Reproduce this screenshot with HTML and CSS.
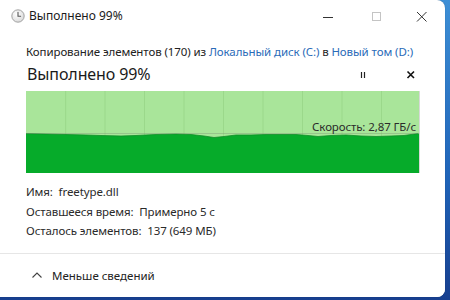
FILE: index.html
```html
<!DOCTYPE html>
<html lang="ru">
<head>
<meta charset="utf-8">
<link rel="stylesheet" href="styles.css">
</head>
<body>
<div class="window">
  <div class="titlebar">
    <svg class="clock" width="14" height="14" viewBox="0 0 14 14">
      <defs>
        <radialGradient id="cg" cx="40%" cy="35%" r="70%">
          <stop offset="0" stop-color="#ffffff"/>
          <stop offset="1" stop-color="#d8d8d8"/>
        </radialGradient>
      </defs>
      <circle cx="7" cy="7" r="6.2" fill="url(#cg)" stroke="#9a9a9a" stroke-width="0.9"/>
      <path d="M7 3.2 V7.3 H9.6" fill="none" stroke="#555" stroke-width="1.1" stroke-linecap="round"/>
    </svg>
    <span class="title">Выполнено 99%</span>
    <div class="winbtns">
      <svg class="wb" width="46" height="30" viewBox="0 0 46 30"><path d="M18 16.5 H28" stroke="#333" stroke-width="1"/></svg>
      <svg class="wb" width="46" height="30" viewBox="0 0 46 30"><rect x="19.5" y="11.5" width="8" height="8" fill="none" stroke="#c4c4c4" stroke-width="1"/></svg>
      <svg class="wb" width="46" height="30" viewBox="0 0 46 30"><path d="M18 11 L27.5 20.5 M27.5 11 L18 20.5" stroke="#333" stroke-width="1"/></svg>
    </div>
  </div>
  <div class="content">
    <div class="copyline">Копирование элементов (170) из <span class="link">Локальный диск (C:)</span> в <span class="link">Новый том (D:)</span></div>
    <div class="headrow">
      <span class="big">Выполнено 99%</span>
      <div class="ctrls">
        <svg width="10" height="10" viewBox="0 0 10 10"><path d="M3.5 2 V8 M6.5 2 V8" stroke="#222" stroke-width="1.2"/></svg>
        <svg width="10" height="10" viewBox="0 0 10 10"><path d="M1.5 1.5 L8 8 M8 1.5 L1.5 8" stroke="#111" stroke-width="1.6"/></svg>
      </div>
    </div>
    <div class="graph">
      <svg width="393" height="82" viewBox="0 0 393 82">
        <rect x="0" y="0" width="393" height="82" fill="#a9e59a"/>
        <g stroke="#9bd88b" stroke-width="1">
          <path d="M39.7 0 V82 M79 0 V82 M118.5 0 V82 M158 0 V82 M197.5 0 V82 M237 0 V82 M276.5 0 V82 M316 0 V82 M355.5 0 V82"/>
        </g>
        <path d="M0 42.5 L20 43 L40 43.5 L60 44 L75 44.5 L95 45 L110 44.5 L130 43.5 L150 43 L165 43.5 L178 45 L188 46.5 L198 45.5 L210 44 L225 44 L240 43.5 L255 43.5 L270 43.5 L282 44.5 L292 45.5 L305 44.5 L320 44 L335 45 L350 45.5 L365 45 L378 44.5 L392 42.5 L393 42.5 V82 H0 Z" fill="#06ab2a"/>
        <path d="M0 42.5 L20 43 L40 43.5 L60 44 L75 44.5 L95 45 L110 44.5 L130 43.5 L150 43 L165 43.5 L178 45 L188 46.5 L198 45.5 L210 44 L225 44 L240 43.5 L255 43.5 L270 43.5 L282 44.5 L292 45.5 L305 44.5 L320 44 L335 45 L350 45.5 L365 45 L378 44.5 L392 42.5" fill="none" stroke="#128c2a" stroke-width="0.8"/>
        <path d="M0 42.5 H393" stroke="#7f9a78" stroke-width="0.7" opacity="0.6"/>
      </svg>
      <div class="speed">Скорость: 2,87 ГБ/с</div>
    </div>
    <div class="info">
      <div>Имя:&nbsp; freetype.dll</div>
      <div>Оставшееся время:&nbsp; Примерно 5 с</div>
      <div>Осталось элементов:&nbsp; 137 (649 МБ)</div>
    </div>
  </div>
  <div class="footer">
    <svg width="12" height="8" viewBox="0 0 12 8"><path d="M1.5 6.5 L6 2 L10.5 6.5" fill="none" stroke="#444" stroke-width="1.1"/></svg>
    <span>Меньше сведений</span>
  </div>
</div>
</body>
</html>
```
FILE: styles.css
```css
html, body {
  margin: 0;
  padding: 0;
}
body {
  width: 450px;
  height: 300px;
  overflow: hidden;
  background: linear-gradient(180deg, #3d8fd6 0%, #1f63b8 60%, #173f8f 100%);
  font-family: "Noto Sans", "Liberation Sans", sans-serif;
  color: #1c1c1c;
}
.window {
  width: 445px;
  height: 297px;
  background: #ffffff;
  border-radius: 0 8px 8px 0;
  display: flex;
  flex-direction: column;
  overflow: hidden;
  box-shadow: 0 0 1px rgba(0,0,0,0.4);
}
.titlebar {
  height: 31px;
  display: flex;
  align-items: center;
  flex-shrink: 0;
}
.clock {
  margin-left: 11px;
  margin-top: 1px;
}
.title {
  margin-left: 4px;
  font-size: 12px;
  color: #1a1a1a;
}
.winbtns {
  margin-left: auto;
  display: flex;
}
.wb {
  display: block;
}
.wb:first-child { margin-right: 2px; }
.content {
  padding: 13px 0 0 26px;
  flex: 1;
}
.copyline {
  font-size: 11.5px;
  line-height: 16px;
  color: #222;
  white-space: nowrap;
  letter-spacing: -0.1px;
}
.link {
  color: #2a6bb8;
}
.headrow {
  display: flex;
  align-items: center;
  height: 24px;
  margin-top: 2px;
  width: 393px;
}
.big {
  font-size: 16px;
  color: #1a1a1a;
  margin-left: 1px;
  letter-spacing: -0.1px;
}
.ctrls {
  margin-left: auto;
  display: flex;
  gap: 38px;
  margin-right: 3px;
  margin-top: 2px;
}
.ctrls svg { display: block; }
.graph {
  position: relative;
  width: 393px;
  height: 82px;
  margin-top: 5px;
  border-right: 1px solid #d8d8d8;
}
.graph svg { display: block; }
.speed {
  position: absolute;
  right: 3px;
  top: 28px;
  font-size: 11.5px;
  color: #2b2b2b;
  letter-spacing: -0.1px;
}
.info {
  margin-top: 9px;
  font-size: 11.5px;
  line-height: 19.5px;
  color: #2a2a2a;
  letter-spacing: -0.1px;
}
.footer {
  height: 43px;
  border-top: 1px solid #e6e6e6;
  display: flex;
  align-items: center;
  padding-left: 31px;
  gap: 9px;
  background: #ffffff;
  flex-shrink: 0;
  font-size: 11.5px;
  color: #222;
}
.footer svg { display: block; margin-top: -1px; }
```
